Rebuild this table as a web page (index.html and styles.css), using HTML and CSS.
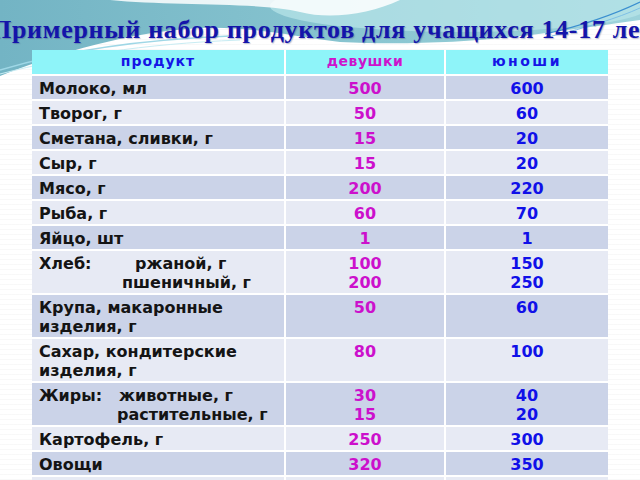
FILE: index.html
```html
<!DOCTYPE html>
<html lang="ru">
<head>
<meta charset="utf-8">
<link rel="stylesheet" href="styles.css">
</head>
<body>
<div class="slide">
  <svg class="deco" width="640" height="480" viewBox="0 0 640 480" aria-hidden="true">
    <defs>
      <linearGradient id="teal" x1="0" y1="0" x2="1" y2="0">
        <stop offset="0" stop-color="#73b4c4"/>
        <stop offset="0.5" stop-color="#86c3cf"/>
        <stop offset="1" stop-color="#9dd3db"/>
      </linearGradient>
    </defs>
    <path d="M0,0 H640 V20 C610,24 585,28 560,31 C500,40 420,46 340,42 C290,36 250,26 200,28 C130,32 60,52 0,76 Z" fill="url(#teal)"/>
    <ellipse cx="460" cy="6" rx="190" ry="26" fill="#b9e5ea" opacity="0.7"/>
    <path d="M110,0 C170,6 260,2 300,12 C330,20 370,14 400,0 Z" fill="#ffffff" opacity="0.85"/>
    <path d="M0,70 C60,52 130,40 230,36" stroke="#9fd7e6" stroke-width="1.5" fill="none"/>
    <path d="M0,74 C70,56 140,44 240,40" stroke="#c8ecf3" stroke-width="1" fill="none"/>
    <path d="M545,34 C580,26 615,14 640,2" stroke="#3b8fd0" stroke-width="1.2" fill="none"/>
    <path d="M552,36 C585,28 618,18 640,8" stroke="#7fc0e6" stroke-width="1" fill="none"/>
  </svg>
  <h1 class="title">Примерный набор продуктов для учащихся 14-17 лет</h1>
  <table class="food">
    <colgroup>
      <col class="c1"><col class="c2"><col class="c3">
    </colgroup>
    <thead>
      <tr>
        <th class="h-prod">продукт</th>
        <th class="h-girl">девушки</th>
        <th class="h-boy">юноши</th>
      </tr>
    </thead>
    <tbody>
      <tr class="dark"><td>Молоко, мл</td><td class="g">500</td><td class="b">600</td></tr>
      <tr class="light"><td>Творог, г</td><td class="g">50</td><td class="b">60</td></tr>
      <tr class="dark"><td>Сметана, сливки, г</td><td class="g">15</td><td class="b">20</td></tr>
      <tr class="light"><td>Сыр, г</td><td class="g">15</td><td class="b">20</td></tr>
      <tr class="dark"><td>Мясо, г</td><td class="g">200</td><td class="b">220</td></tr>
      <tr class="light"><td>Рыба, г</td><td class="g">60</td><td class="b">70</td></tr>
      <tr class="dark"><td>Яйцо, шт</td><td class="g">1</td><td class="b">1</td></tr>
      <tr class="light">
        <td><div><span class="lab lab-bread">Хлеб:</span>ржаной, г</div><div class="sub sub-bread">пшеничный, г</div></td>
        <td class="g">100<br>200</td><td class="b">150<br>250</td>
      </tr>
      <tr class="dark"><td>Крупа, макаронные<br>изделия, г</td><td class="g">50</td><td class="b">60</td></tr>
      <tr class="light"><td>Сахар, кондитерские<br>изделия, г</td><td class="g">80</td><td class="b">100</td></tr>
      <tr class="dark">
        <td><div><span class="lab lab-fat">Жиры:</span>животные, г</div><div class="sub sub-fat">растительные, г</div></td>
        <td class="g">30<br>15</td><td class="b">40<br>20</td>
      </tr>
      <tr class="light"><td>Картофель, г</td><td class="g">250</td><td class="b">300</td></tr>
      <tr class="dark"><td>Овощи</td><td class="g">320</td><td class="b">350</td></tr>
      <tr class="light"><td>&nbsp;</td><td class="g">&nbsp;</td><td class="b">&nbsp;</td></tr>
    </tbody>
  </table>
</div>
</body>
</html>
```
FILE: styles.css
```css
html, body {
  margin: 0;
  padding: 0;
  background: #ffffff;
}
.slide {
  position: relative;
  width: 640px;
  height: 480px;
  overflow: hidden;
  background-color: #ffffff;
  background-image: repeating-linear-gradient(0deg, rgba(120,120,120,0.05) 0 1px, transparent 1px 5px);
}
.deco {
  position: absolute;
  left: 0;
  top: 0;
  z-index: 0;
}
.title {
  position: relative;
  z-index: 1;
  margin: 0;
  padding-top: 16px;
  margin-left: -9px;
  height: 34px;
  white-space: nowrap;
  font-family: "Liberation Serif", "Times New Roman", serif;
  font-weight: bold;
  font-size: 26px;
  line-height: 28px;
  letter-spacing: 0.7px;
  color: #1414aa;
  text-shadow: 1px 1px 1px rgba(60, 60, 120, 0.35);
}
.food {
  position: relative;
  z-index: 1;
  margin-left: 32px;
  width: 576px;
  table-layout: fixed;
  border-collapse: separate;
  border-spacing: 0;
  font-family: "DejaVu Sans", "Verdana", sans-serif;
  font-weight: bold;
  font-size: 16px;
  line-height: 19px;
}
.c1 { width: 252px; }
.c2 { width: 160px; }
.c3 { width: 164px; }
.food th, .food td {
  box-sizing: border-box;
  padding: 3px 0 1px 7px;
  vertical-align: top;
  border-bottom: 2px solid #ffffff;
  white-space: nowrap;
}
.food th + th, .food td + td {
  border-left: 2px solid #ffffff;
  text-align: center;
  padding-left: 0;
}
.food th {
  background: #8ef4f9;
  font-size: 14px;
  text-align: center;
  padding: 2px 0 3px 0;
}
.h-prod { color: #1515e6; letter-spacing: 1px; }
.h-girl { color: #cc14cc; letter-spacing: 0.5px; }
.h-boy { color: #1515e6; letter-spacing: 2.5px; }
.dark td { background: #cbd3e8; }
.light td { background: #e7eaf4; }
.food td { color: #141414; }
.food td.g { color: #cc10cc; }
.food td.b { color: #1010e8; }
.lab { display: inline-block; }
.lab-bread { width: 96px; }
.lab-fat { width: 80px; }
.sub-bread { padding-left: 83px; }
.sub-fat { padding-left: 78px; }
```
